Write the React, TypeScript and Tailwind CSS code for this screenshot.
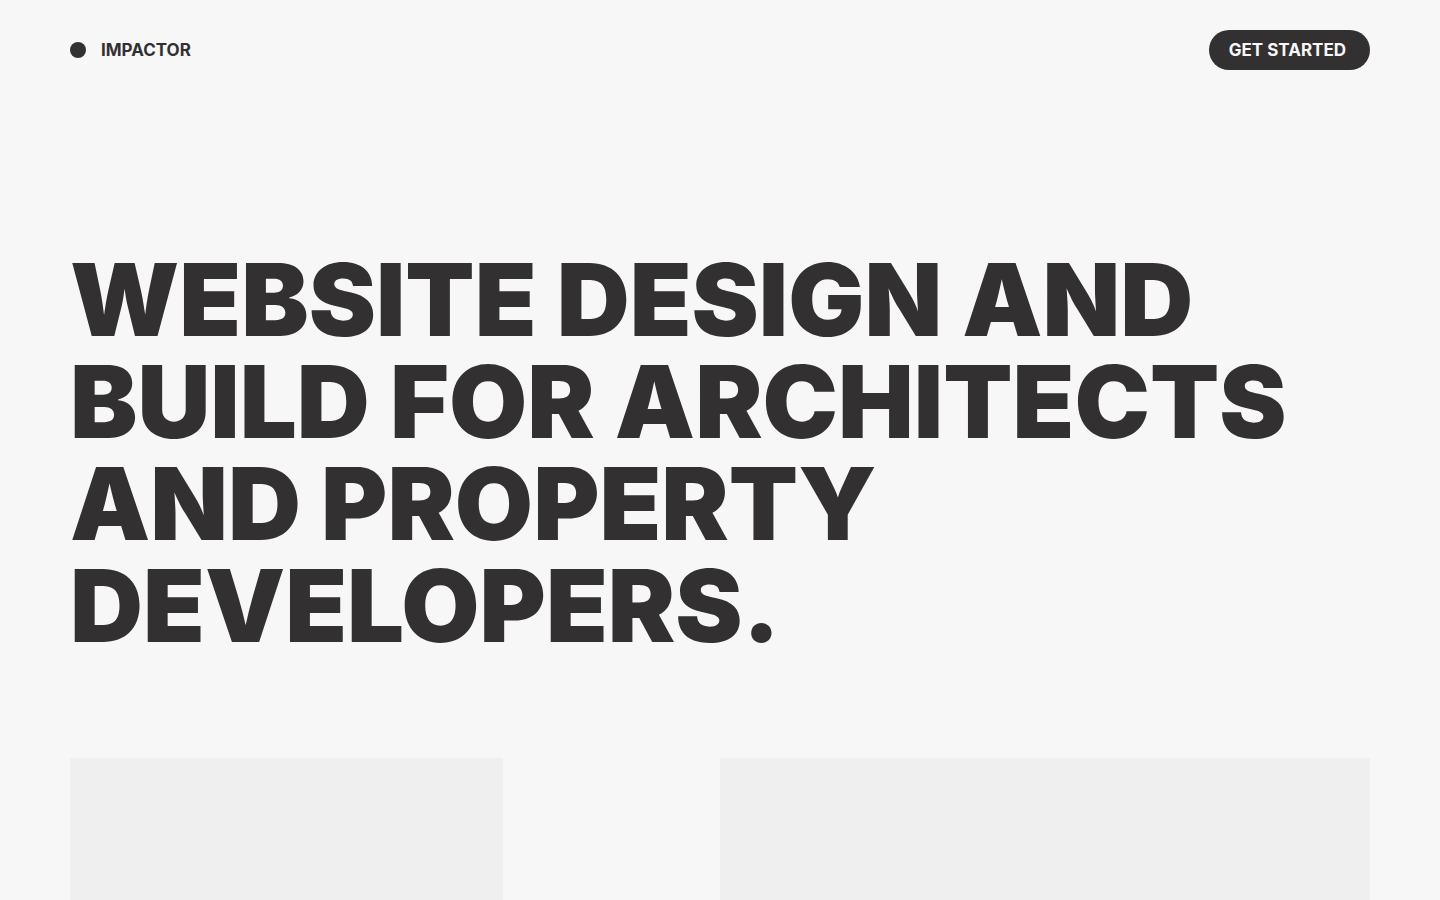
export default function App() {
  return (
    <div className="flex min-h-screen flex-col bg-[#f7f7f7] px-[70px] font-['Inter',sans-serif] text-[#333031]">
      <header className="flex h-[100px] items-center justify-between">
        <a href="#" className="flex items-center gap-[15px] text-[17px] leading-6 font-bold">
          <span className="size-4 rounded-full bg-[#333031]" />
          IMPACTOR
        </a>
        <a href="#start" className="flex h-10 items-center rounded-full bg-[#333031] pr-6 pl-5 text-[17px] leading-6 font-bold text-[#f7f7f7]">
          GET STARTED
        </a>
      </header>
      <main className="flex grow flex-col">
        <h1 className="pt-[148px] text-[101px] leading-[102px] font-black">
          WEBSITE DESIGN AND
          <br />
          BUILD FOR ARCHITECTS
          <br />
          AND PROPERTY
          <br />
          DEVELOPERS.
        </h1>
        <section className="mt-[102px] grid grow grid-cols-6">
          <div className="col-span-2 bg-[#efefef]" />
          <div className="col-span-3 col-start-4 bg-[#efefef]" />
        </section>
      </main>
    </div>
  );
}
